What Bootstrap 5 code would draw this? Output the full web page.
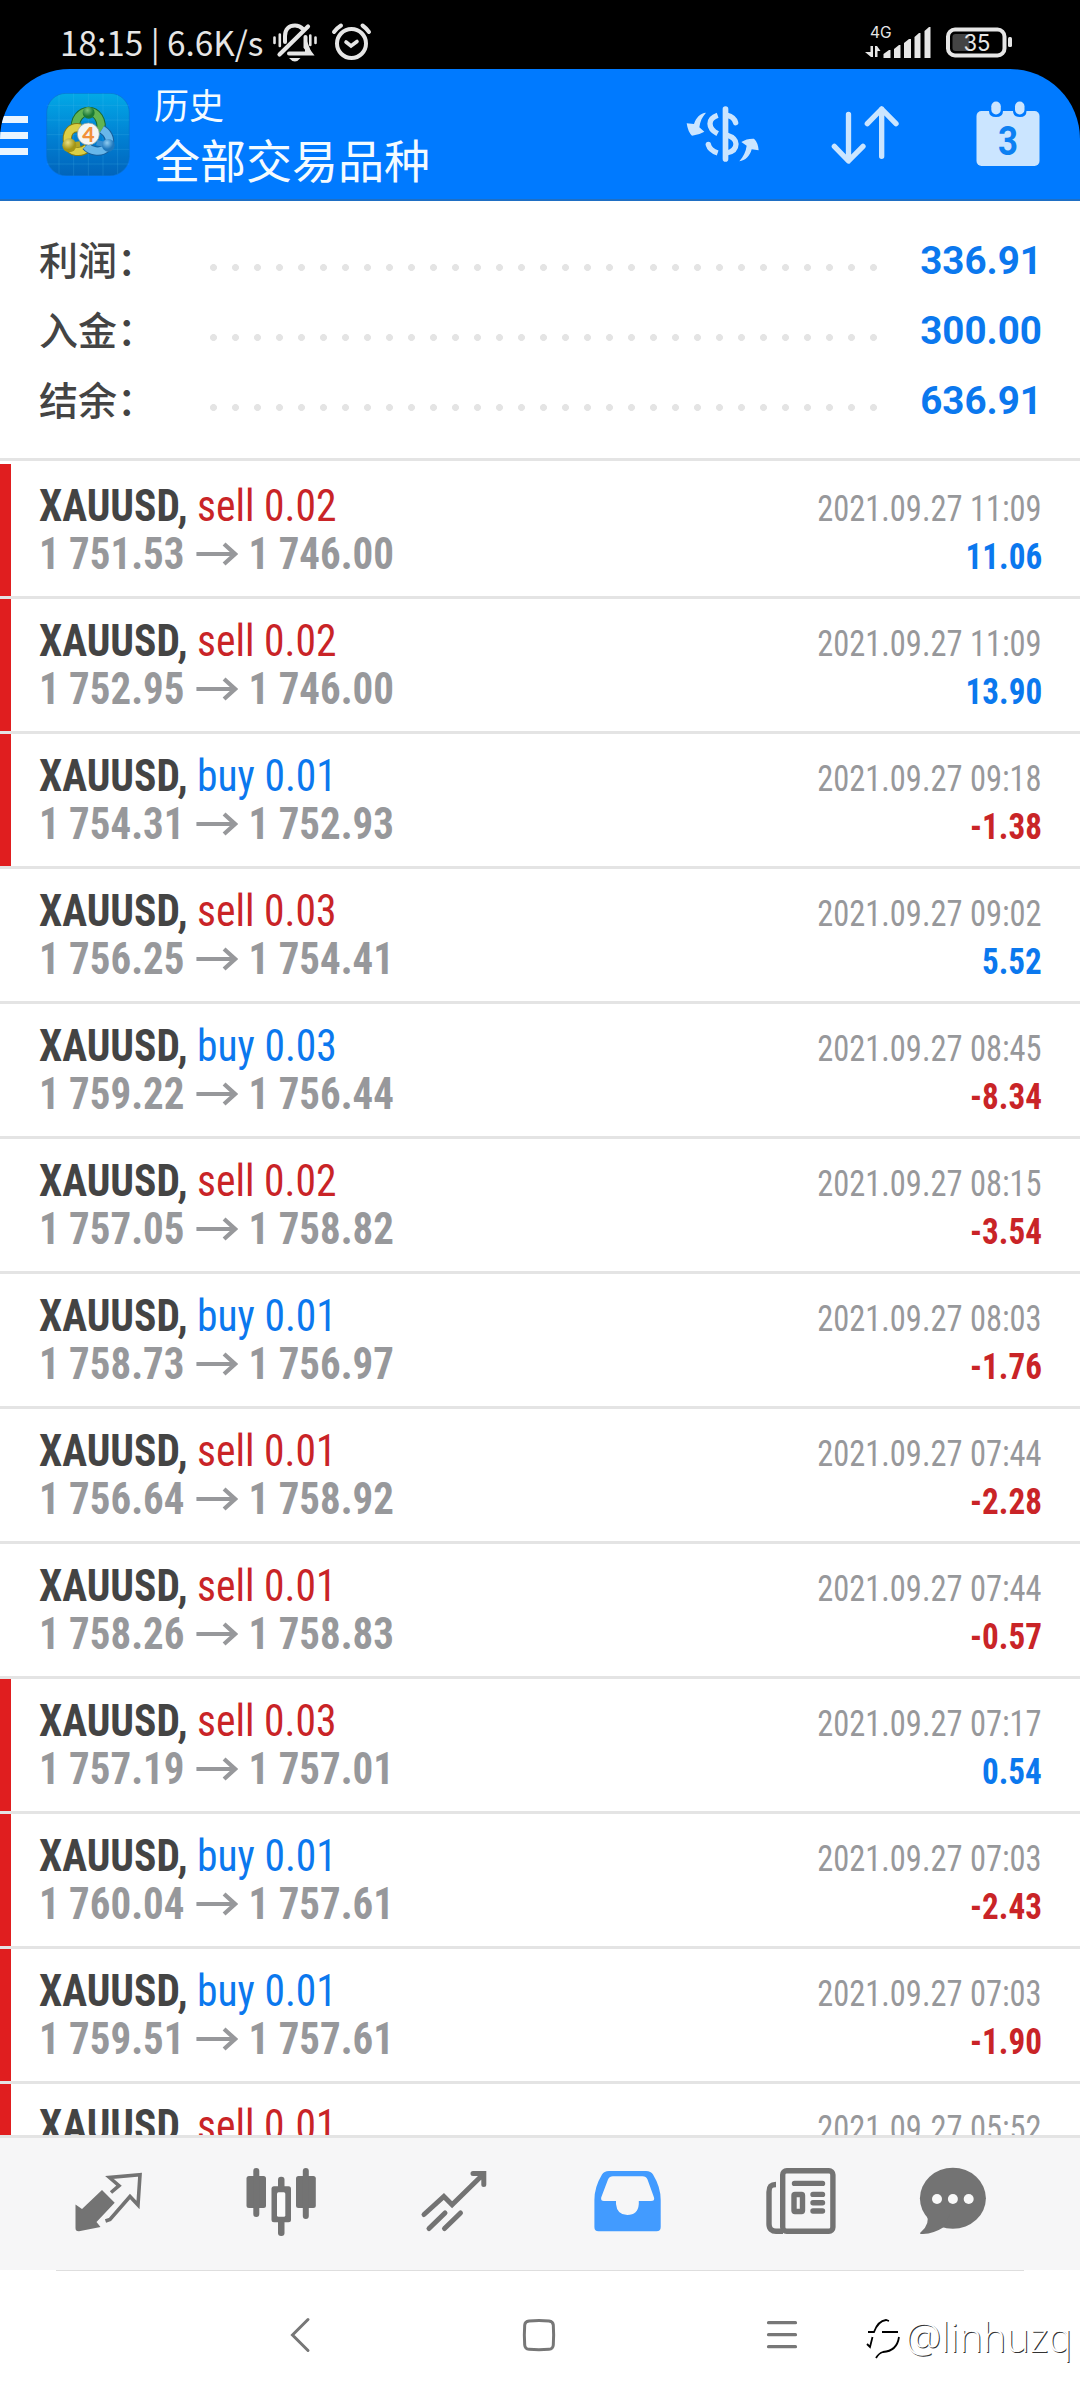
<!DOCTYPE html>
<html lang="zh-CN">
<head>
<meta charset="utf-8">
<meta name="viewport" content="width=device-width, initial-scale=1">
<title>历史</title>
<link rel="stylesheet" href="https://cdn.jsdelivr.net/npm/bootstrap@5.3.0/dist/css/bootstrap.min.css">
<style>
  body { background: #000; font-family: Roboto, "Noto Sans CJK SC", sans-serif; }
  svg { display: block; flex: none; }
  .screen { width: 1080px; height: 2400px; background: #000; }
  .status { height: 69px; padding: 0 68px 0 60px; color: #e6e6e6; }
  .clock { font: 400 33.3px/40px "Noto Sans CJK SC", sans-serif; width: 213px; padding-top: 14px; white-space: nowrap; }
  .topbar { height: 132px; background: #007aff; border-bottom: 2px solid #1f6fc4; border-radius: 70px 70px 0 0; overflow: hidden; color: #fff; }
  .topbar-logo { margin-left: 18px; margin-top: 1px; }
  .titles { margin-left: 24px; font-family: "Noto Sans CJK SC", sans-serif; color: #f4fbff; padding-bottom: 4px; }
  .title-sm { font-size: 35px; line-height: 51px; }
  .title-lg { font-size: 46px; line-height: 58px; }
  .summary { height: 260px; padding: 25px 38px 0 39px; border-bottom: 3px solid #e4e4e4; }
  .sum-line { height: 70px; }
  .sum-label { width: 170px; font: 500 39px/70px "Noto Sans CJK SC", sans-serif; color: #444; padding-bottom: 6px; }
  .sum-dots { width: 682px; height: 7px; margin-top: 13px; margin-left: 1px; background: radial-gradient(circle at 3.5px 3.5px, #e4e4e4 3.1px, transparent 3.8px) 0 0 / 22px 7px repeat-x; }
  .sum-value { font-size: 38.6px; font-weight: 700; color: #0b78ee; line-height: 70px; }
  .deals { height: 1674px; padding-top: 3px; overflow: hidden; font-stretch: 75%; --bs-list-group-border-width: 3px; --bs-list-group-border-color: #e4e4e4; }
  .deal { height: 135px; flex: none; padding: 18px 38px 0 39px; }
  .deal-row { height: 48px; line-height: 48px; font-size: 44px; white-space: nowrap; }
  .flagged { background: linear-gradient(#e01e1f, #e01e1f) 0 0 / 11px 132px no-repeat; }
  .deal-name { transform: scaleX(.943); transform-origin: left; }
  .symbol { font-weight: 700; color: #444; }
  .sell { color: #c92427; }
  .buy { color: #0b78ee; }
  .price { font-weight: 700; color: #97989b; transform: scaleX(.93); transform-origin: left; }
  .price svg { display: inline-block; vertical-align: 3px; margin: 0 11px 0 13px; }
  .when { font-size: 36.4px; color: #97989b; transform: scaleX(.892); transform-origin: right; }
  .result { font-size: 36.4px; font-weight: 700; transform: scaleX(.91); transform-origin: right; }
  .loss { color: #c92427; }
  .gain { color: #0b78ee; }
  .tabs { height: 135px; background: #f6f6f7; border-top: 3px solid #e4e4e4; padding: 20px 0 0 21px; color: #737373; }
  .tabs > a { width: 173.3px; color: inherit; display: flex; justify-content: center; }
  .tabs > a:last-child { width: 131px; }
  .sysnav { height: 129px; padding-top: 41px; }
  .sysnav-line { height: 1px; width: 968px; background: #dedede; }
  .stamp { right: 8px; bottom: 36px; color: #fff; font: 300 40px/54px "Open Sans", sans-serif; text-shadow: 1px 1px 0 #333; }
</style>
</head>
<body>
<svg width="0" height="0" class="position-absolute">
  <symbol id="arr" viewBox="0 0 42 24" preserveAspectRatio="none"><path d="M0 12H38M28 2L39 12L28 22" fill="none" stroke="#97989b" stroke-width="4.2"/></symbol>
</svg>
<main class="screen d-flex flex-column overflow-hidden position-relative">
  <header class="status d-flex align-items-center flex-shrink-0">
    <div class="clock">18:15 | 6.6K/s</div>
    <svg width="100" height="69" viewBox="273 0 100 69" fill="none" stroke="#e6e6e6" stroke-width="4" stroke-linecap="round">
      <path d="M285 42V36C285 29 289 25.500 295 25.500C299 25.500 301 27 303 29" stroke-width="4"/>
      <path d="M308 26.500L279.500 54.500" stroke-width="4.200"/>
      <path d="M305.500 37V47L310.500 53.500H289" />
      <path d="M305 36L312 54H305Z" fill="#e6e6e6" stroke="none"/>
      <path d="M289 58H300.500Q295 65 289 58Z" fill="#e6e6e6" stroke="none"/>
      <path d="M274.500 37.500V43M279.800 34.500V46M310.300 35.500V45M315.500 37.500V43" stroke-width="2.600"/>
      <circle cx="351.500" cy="43.500" r="14.500"/>
      <path d="M346 42L351 46L357 41.500" stroke-width="3.600"/>
      <path d="M334 32Q337 28 341 25.500M369 32Q366 28 362.500 25.500"/>
    </svg>
    <svg class="ms-auto" width="148" height="69" viewBox="864 0 148 69" fill="#e6e6e6">
      <text x="870" y="37.500" font-family="Inter, sans-serif" font-size="15.500">4G</text>
      <path d="M870.500 46H873V57H871L865 52H870.500ZM875 57V46H877L880.500 51H877.500V57Z"/>
      <path d="M883.500 54L889 50H890.500V58H883.500ZM894 49L899 45H900.500V58H894ZM904 43L909 39H911V58H904ZM914.500 37L919 33H920.500V58H914.500ZM924.500 31L929 27H930.500V58H924.500Z"/>
      <rect x="948" y="29.500" width="56.500" height="26" rx="7" fill="none" stroke="#e6e6e6" stroke-width="4"/>
      <rect x="952.500" y="34" width="17" height="17" rx="3" fill="#444"/>
      <rect x="1008" y="37" width="4" height="10" rx="1.500"/>
      <text x="963.500" y="51" font-family="Inter, sans-serif" font-size="23" textLength="27" lengthAdjust="spacingAndGlyphs">35</text>
    </svg>
  </header>

  <nav class="topbar d-flex align-items-center flex-shrink-0">
    <svg width="28" height="42" fill="#eaf5ff"><path d="M0 3H28V10H0ZM0 19H28V26H0ZM0 35H28V42H0Z"/></svg>
    <svg class="topbar-logo" width="84" height="83" viewBox="19 11 250 249">
      <defs>
        <linearGradient id="sky" x1="0" y1="0" x2="0" y2="1"><stop offset="0" stop-color="#02a9e6"/><stop offset=".55" stop-color="#017fd2"/><stop offset="1" stop-color="#0164bb"/></linearGradient>
        <radialGradient id="g" cx=".4" cy=".3"><stop offset="0" stop-color="#7cc47a"/><stop offset="1" stop-color="#1c7a35"/></radialGradient>
        <radialGradient id="y" cx=".4" cy=".3"><stop offset="0" stop-color="#e9e083"/><stop offset="1" stop-color="#a39516"/></radialGradient>
        <radialGradient id="b" cx=".4" cy=".3"><stop offset="0" stop-color="#90cdf2"/><stop offset="1" stop-color="#1f78bd"/></radialGradient>
      </defs>
      <rect x="20" y="12" width="248" height="247" rx="58" fill="url(#sky)" stroke="#0b6fd0" stroke-width="2"/>
      <path d="M57 16V255M101 12V259M145 12V259M189 12V259M233 16V255M20 48H268M20 92H268M20 136H268M20 180H268M20 224H268" stroke="#5cc4f0" stroke-opacity=".28" stroke-width="2"/>
      <path d="M109 126C98 88 126 66 146 66C168 66 192 92 180 130" fill="none" stroke="#1c6a30" stroke-width="28"/>
      <path d="M109 126C98 88 126 66 146 66C168 66 192 92 180 130" fill="none" stroke="#62b552" stroke-width="22"/>
      <path d="M122 116C92 110 76 132 84 165C92 190 122 192 142 176" fill="none" stroke="#857a12" stroke-width="28"/>
      <path d="M122 116C92 110 76 132 84 165C92 190 122 192 142 176" fill="none" stroke="#dccf45" stroke-width="22"/>
      <path d="M186 120C208 134 216 158 200 175C180 194 150 184 138 170" fill="none" stroke="#185f9c" stroke-width="28"/>
      <path d="M186 120C208 134 216 158 200 175C180 194 150 184 138 170" fill="none" stroke="#68b7ea" stroke-width="22"/>
      <circle cx="146" cy="70" r="18" fill="url(#g)"/>
      <path d="M88 168L120 164" stroke="#b3a624" stroke-width="16"/>
      <circle cx="88" cy="168" r="21" fill="url(#y)"/>
      <path d="M205 168L170 160" stroke="#3b8fd0" stroke-width="16"/>
      <circle cx="205" cy="168" r="19" fill="url(#b)"/>
      <circle cx="145" cy="134" r="33" fill="#f5f5f3" stroke="#8b9a94" stroke-width="2"/>
      <text x="145" y="157" text-anchor="middle" font-family="Lato, sans-serif" font-weight="900" font-size="64" fill="#f2903a">4</text>
    </svg>
    <div class="titles">
      <div class="title-sm">历史</div>
      <div class="title-lg">全部交易品种</div>
    </div>
    <svg class="ms-auto" width="77" height="60" viewBox="40 40 231 180" fill="none" stroke="#cbe5ff" stroke-width="16">
      <path d="M164.500 55V205" stroke-width="17" stroke-linecap="round"/>
      <path d="M170 74Q190 78 195 96" stroke-linecap="round"/>
      <path d="M168 133C190 140 196 148 196 160C196 176 184 184 168 187"/>
      <path d="M141 74C124 80 118 88 118 99C118 112 128 122 141 129"/>
      <path d="M141 187C126 182 116 174 113 162"/>
      <circle cx="113" cy="161" r="8" fill="#cbe5ff" stroke="none"/>
      <path d="M106 66C90 67 76 80 70 100L48 98Q52 125 64 135Q85 133 101 123L86 110C88 92 95 78 106 66ZM206 212C224 210 238 196 243 176L264 179Q262 155 250 144Q228 143 212 154L228 165C226 182 218 198 206 212Z" fill="#cbe5ff" stroke="none"/>
    </svg>
    <svg style="margin-left:69px" width="70" height="60" viewBox="480 40 210 180" fill="none" stroke="#cbe5ff" stroke-width="16" stroke-linecap="round" stroke-linejoin="round">
      <path d="M535.500 71V210M493 167L535.500 211L579 167M635 197V55M592 99L635 55L678 99"/>
    </svg>
    <svg style="margin:0 40px 0 76px" width="64" height="66" viewBox="976 101 64 66">
      <rect x="976.500" y="111" width="63" height="55" rx="5" fill="#cbe5ff"/>
      <path d="M989 110V111Q989 117 996 117Q1003 117 1003 111V110ZM1013 110V111Q1013 117 1020 117Q1026.500 117 1026.500 111V110Z" fill="#007aff"/>
      <rect x="991.300" y="101.500" width="9.500" height="13" rx="4.700" fill="#cbe5ff"/><rect x="1015" y="101.500" width="9.500" height="13" rx="4.700" fill="#cbe5ff"/>
      <text x="998" y="155" textLength="20" lengthAdjust="spacingAndGlyphs" font-family="Roboto, sans-serif" font-weight="700" font-size="40" fill="#0d80f2">3</text>
    </svg>
  </nav>

  <section class="bg-white flex-shrink-0 summary">
    <div class="sum-line d-flex align-items-center"><div class="sum-label">利润：</div><div class="sum-dots"></div><div class="sum-value ms-auto">336.91</div></div>
    <div class="sum-line d-flex align-items-center"><div class="sum-label">入金：</div><div class="sum-dots"></div><div class="sum-value ms-auto">300.00</div></div>
    <div class="sum-line d-flex align-items-center"><div class="sum-label">结余：</div><div class="sum-dots"></div><div class="sum-value ms-auto">636.91</div></div>
  </section>

  <section class="deals bg-white list-group list-group-flush flex-shrink-0" id="deals"></section>

  <nav class="tabs d-flex align-items-start flex-shrink-0">
    <a><svg width="80" height="80" viewBox="68 2158 80 80"><path d="M102 2190L114.700 2202.700L96.500 2222L100.500 2227L79 2231.300Q75.500 2231.500 75.500 2228V2204.500L82 2209Z" fill="currentColor"/><path d="M111 2192.500L119 2185.700L109.500 2177.500L140 2174.800L138 2205L130 2196.500L110 2219.500L105.500 2221" fill="none" stroke="currentColor" stroke-width="3.600"/></svg></a>
    <a><svg width="80" height="80" viewBox="241 2158 80 80" fill="currentColor"><rect x="246.500" y="2176" width="19.500" height="32" rx="2.500"/><rect x="253.300" y="2168" width="6" height="49" rx="3"/><rect x="271.500" y="2186.300" width="19.500" height="36" rx="2.500"/><rect x="278" y="2176.700" width="6.500" height="59.300" rx="3"/><rect x="277" y="2192.300" width="8.300" height="24.400" rx="1.500" fill="#fafafa"/><rect x="296" y="2176" width="19.800" height="32" rx="2.500"/><rect x="302.800" y="2168" width="6" height="51" rx="3"/></svg></a>
    <a><svg width="80" height="80" viewBox="414 2158 80 80" fill="none" stroke="currentColor" stroke-width="5" stroke-linecap="round"><path d="M424 2214.500L443.900 2196.500L452.100 2204.700L483 2174.500M473 2173.500H483.800V2184.500M429 2228.500L445 2213M444.500 2228.500L460.500 2213"/></svg></a>
    <a><svg width="80" height="80" viewBox="588 2158 80 80"><path fill="#429bff" fill-rule="evenodd" d="M609 2171H646Q651 2171 653 2174.500Q660.700 2187 660.700 2200V2227Q660.700 2231.300 656.500 2231.300H598.500Q594.400 2231.300 594.400 2227V2200Q594.400 2187 602 2174.500Q604 2171 609 2171ZM613 2176.300Q609.500 2176.300 608 2179.500L601.200 2197.500Q600.500 2201 604 2201H616V2204Q617 2215 627.300 2215Q638 2215 638.800 2204V2201H651Q655 2201 654 2197.500L647.500 2179.500Q646 2176.300 642.500 2176.300Z"/></svg></a>
    <a><svg width="80" height="80" viewBox="761 2158 80 80" fill="none" stroke="currentColor" stroke-width="5.400"><rect x="782.700" y="2170.700" width="50.200" height="60.600" rx="4"/><path d="M776 2184.500C770.500 2184.500 769 2187 769 2192V2224C769 2229 772 2231.300 776 2231.300H783"/><path d="M794.500 2183.400H822.500M813 2194.400H822.500M813 2202.700H822.500M813 2211H822.500" stroke-linecap="round"/><rect x="794" y="2194.500" width="8.500" height="17" rx="1"/></svg></a>
    <a><svg width="80" height="80" viewBox="913 2158 80 80" fill="currentColor"><ellipse cx="952.900" cy="2198.300" rx="33" ry="30.500"/><path d="M926 2214Q931 2223 921 2232Q918 2234 923 2234Q934 2233.500 944 2227L950 2214Z"/><g fill="#f8f8f8"><circle cx="937" cy="2199" r="5"/><circle cx="952.900" cy="2199" r="5"/><circle cx="968.700" cy="2199" r="5"/></g></svg></a>
  </nav>

  <footer class="bg-white flex-shrink-0">
    <div class="sysnav-line mx-auto"></div>
    <div class="sysnav d-flex justify-content-center">
      <svg width="40" height="46" viewBox="280 2312 40 46" fill="none" stroke="#777" stroke-width="3"><path d="M309 2319.500L293.500 2335L309 2350.500" stroke-linecap="round"/></svg>
      <svg style="margin:0 202px 0 200px" width="40" height="46" viewBox="520 2312 40 46" fill="none" stroke="#777" stroke-width="3"><path d="M530 2321Q540 2320 550 2321Q554 2321.500 554.300 2325Q555 2335 554.300 2345Q554 2349 550 2349.300Q540 2350 530 2349.300Q526 2349 525.700 2345Q525 2335 525.700 2325Q526 2321.500 530 2321Z"/></svg>
      <svg width="40" height="46" viewBox="762 2312 40 46" stroke="#777" stroke-width="3.200" stroke-linecap="round"><path d="M769.500 2322.700H796.500M769.500 2334.700H796.500M769.500 2346.700H796.500"/></svg>
    </div>
  </footer>

  <div class="stamp position-absolute d-flex align-items-center">
    <svg class="me-1" width="38" height="46" viewBox="864 2318 38 46" fill="none" stroke="#000" stroke-width="1.800"><path d="M869 2336H875Q879 2325 887 2324L890 2325M883 2336H899M873.500 2341L871 2351L868 2348M900 2341Q898 2355 884 2356Q880 2357 877 2362"/></svg>
    <span>@linhuzq</span>
  </div>
</main>
<script>
  // side, lots, open, close, time, result, flagged
  const deals = [
    ["sell", "0.02", "1 751.53", "1 746.00", "2021.09.27 11:09", "11.06", 1],
    ["sell", "0.02", "1 752.95", "1 746.00", "2021.09.27 11:09", "13.90", 1],
    ["buy", "0.01", "1 754.31", "1 752.93", "2021.09.27 09:18", "-1.38", 1],
    ["sell", "0.03", "1 756.25", "1 754.41", "2021.09.27 09:02", "5.52", 0],
    ["buy", "0.03", "1 759.22", "1 756.44", "2021.09.27 08:45", "-8.34", 0],
    ["sell", "0.02", "1 757.05", "1 758.82", "2021.09.27 08:15", "-3.54", 0],
    ["buy", "0.01", "1 758.73", "1 756.97", "2021.09.27 08:03", "-1.76", 0],
    ["sell", "0.01", "1 756.64", "1 758.92", "2021.09.27 07:44", "-2.28", 0],
    ["sell", "0.01", "1 758.26", "1 758.83", "2021.09.27 07:44", "-0.57", 0],
    ["sell", "0.03", "1 757.19", "1 757.01", "2021.09.27 07:17", "0.54", 1],
    ["buy", "0.01", "1 760.04", "1 757.61", "2021.09.27 07:03", "-2.43", 1],
    ["buy", "0.01", "1 759.51", "1 757.61", "2021.09.27 07:03", "-1.90", 1],
    ["sell", "0.01", "", "", "2021.09.27 05:52", "", 1]
  ];
  document.getElementById("deals").innerHTML = deals.map(([side, lots, open, close, when, result, flag]) => `
    <div class="deal list-group-item ${flag ? "flagged" : ""}">
      <div class="deal-row d-flex justify-content-between align-items-baseline">
        <div class="deal-name"><span class="symbol">XAUUSD,</span> <span class="${side}">${side} ${lots}</span></div>
        <div class="when">${when}</div>
      </div>
      ${open ? `<div class="deal-row d-flex justify-content-between align-items-baseline">
        <div class="price"><span>${open}</span><svg width="45" height="24"><use href="#arr"/></svg><span>${close}</span></div>
        <div class="result ${result[0] === "-" ? "loss" : "gain"}">${result}</div>
      </div>` : ""}
    </div>`).join("");
</script>
<script src="https://cdn.jsdelivr.net/npm/bootstrap@5.3.0/dist/js/bootstrap.bundle.min.js"></script>
</body>
</html>
